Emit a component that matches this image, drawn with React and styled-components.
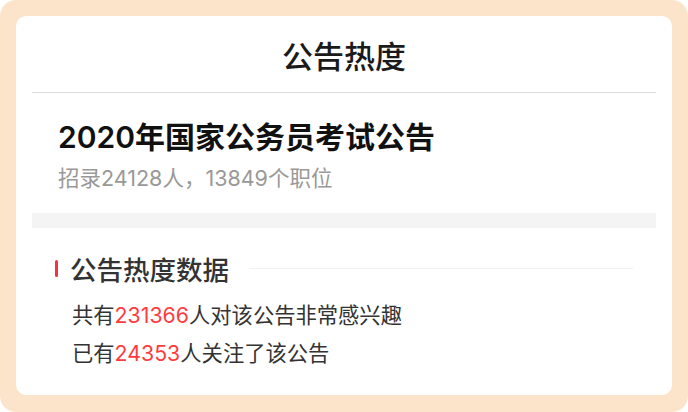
import React from 'react'
import styled, { createGlobalStyle } from 'styled-components'

const GlobalStyle = createGlobalStyle`
  html, body {
    margin: 0;
    padding: 0;
    background: #fff;
  }
  body {
    font-family: Inter, "Noto Sans CJK SC", sans-serif;
  }
`

const stats = [
  { before: '共有', num: '231366', after: '人对该公告非常感兴趣' },
  { before: '已有', num: '24353', after: '人关注了该公告' },
]

const App = () => {
  return (
    <>
      <GlobalStyle />
      <Frame>
        <Card>
          <Header>公告热度</Header>
          <Info>
            <Name>2020年国家公务员考试公告</Name>
            <Sub>招录24128人，13849个职位</Sub>
          </Info>
          <Band />
          <Section>
            <SectionHead>
              <Bar />
              <SectionTitle>公告热度数据</SectionTitle>
              <Rule />
            </SectionHead>
            {stats.map((s) => (
              <Line key={s.num}>
                {s.before}
                <Num>{s.num}</Num>
                {s.after}
              </Line>
            ))}
          </Section>
        </Card>
      </Frame>
    </>
  )
}

const Frame = styled.div`
  width: 688px;
  height: 412px;
  box-sizing: border-box;
  padding: 16px 16px 17px 16px;
  background: #fce4cb;
  border-radius: 16px;
`
const Card = styled.div`
  height: 100%;
  box-sizing: border-box;
  background: #fff;
  border-radius: 10px;
  padding: 0 16px;
  display: flex;
  flex-direction: column;
`
const Header = styled.div`
  height: 70px;
  padding-top: 6px;
  line-height: 70px;
  text-align: center;
  font-size: 31px;
  font-weight: 500;
  color: #1a1a1a;
  border-bottom: 1px solid #dcdcdc;
`
const Info = styled.div`
  padding: 24px 26px 20px;
  display: flex;
  flex-direction: column;
  gap: 6px;
`
const Name = styled.div`
  font-size: 30px;
  line-height: 40px;
  font-weight: 600;
  color: #111;
`
const Sub = styled.div`
  font-size: 21.5px;
  line-height: 30px;
  color: #999;
`
const Band = styled.div`
  height: 15px;
  background: #f4f4f4;
`
const Section = styled.div`
  padding: 22px 23px 0 23px;
  display: flex;
  flex-direction: column;
`
const SectionHead = styled.div`
  height: 36px;
  display: flex;
  align-items: center;
  margin-bottom: 10px;
`
const Bar = styled.span`
  width: 3px;
  height: 17px;
  border-radius: 2px;
  background: #f5333f;
  margin-right: 12px;
`
const SectionTitle = styled.span`
  font-size: 26.5px;
  font-weight: 500;
  color: #333;
`
const Rule = styled.span`
  flex: 1;
  height: 1px;
  background: #f0f0f0;
  margin-left: 20px;
`
const Line = styled.div`
  padding-left: 17px;
  font-size: 21.3px;
  line-height: 38px;
  color: #333;
`
const Num = styled.span`
  color: #ff3b3f;
`

export default App
